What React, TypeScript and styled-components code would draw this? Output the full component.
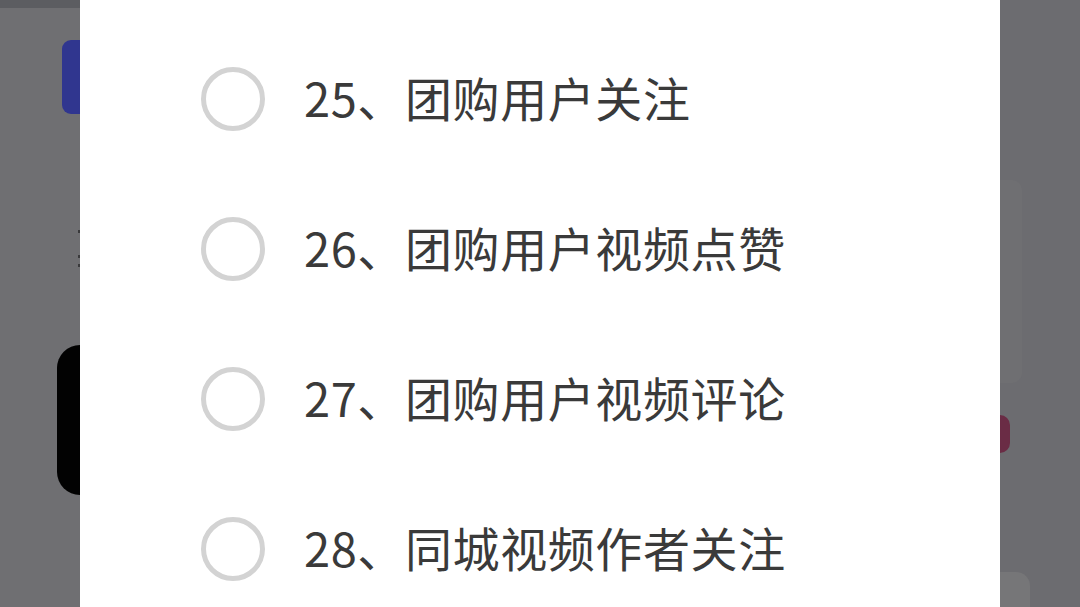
import styled, { createGlobalStyle } from "styled-components";

const GlobalStyle = createGlobalStyle`
  html, body {
    margin: 0;
    padding: 0;
    background: #6e6e71;
  }
  body {
    font-family: "Noto Sans CJK SC", "Noto Sans", sans-serif;
  }
`;

const options = [
  "25、团购用户关注",
  "26、团购用户视频点赞",
  "27、团购用户视频评论",
  "28、同城视频作者关注",
];

export default function App() {
  return (
    <>
      <GlobalStyle />
      <Screen>
        <LeftGutter>
          <TopStrip />
          <TabMarker />
          <Peek>
            <Tick />
            <Tick />
            <Tick />
          </Peek>
          <DarkButton />
        </LeftGutter>

        <Sheet>
          {options.map((label) => (
            <OptionRow key={label}>
              <Radio />
              <OptionLabel>{label}</OptionLabel>
            </OptionRow>
          ))}
        </Sheet>

        <RightGutter>
          <SidePanel />
          <PinkDot />
          <CornerBlob />
        </RightGutter>
      </Screen>
    </>
  );
}

const Screen = styled.div`
  width: 1080px;
  height: 607px;
  overflow: hidden;
  display: flex;
  background: #6f6f72;
`;

const LeftGutter = styled.div`
  width: 80px;
  flex-shrink: 0;
  display: flex;
  flex-direction: column;
  align-items: flex-end;
`;

const TopStrip = styled.div`
  align-self: stretch;
  height: 8px;
  background: #5c5d61;
`;

const TabMarker = styled.div`
  width: 18px;
  height: 74px;
  margin-top: 32px;
  background: #30368f;
  border-radius: 9px 0 0 9px;
`;

const Peek = styled.div`
  margin-top: 116px;
  display: flex;
  flex-direction: column;
  align-items: flex-end;
  gap: 6px;
`;

const Tick = styled.span`
  width: 2px;
  height: 3px;
  background: #3a3a3c;
  &:first-child {
    margin-bottom: 16px;
  }
`;

const DarkButton = styled.div`
  width: 23px;
  height: 150px;
  margin-top: 78px;
  background: #020202;
  border-radius: 26px 0 0 26px;
`;

const Sheet = styled.div`
  width: 920px;
  flex-shrink: 0;
  background: #ffffff;
  padding: 24px 0 0 121px;
  box-sizing: border-box;
  display: flex;
  flex-direction: column;
`;

const OptionRow = styled.div`
  height: 150px;
  flex-shrink: 0;
  display: flex;
  align-items: center;
  gap: 39px;
`;

const Radio = styled.span`
  width: 64px;
  height: 64px;
  box-sizing: border-box;
  border: 5px solid #d3d3d3;
  border-radius: 50%;
  flex-shrink: 0;
`;

const OptionLabel = styled.span`
  font-size: 47px;
  font-weight: 400;
  line-height: 1;
  padding-bottom: 6px;
  color: #3a3a3a;
  letter-spacing: 0.6px;
`;

const RightGutter = styled.div`
  flex: 1;
  display: flex;
  flex-direction: column;
  align-items: flex-start;
  background: #6c6c70;
`;

const SidePanel = styled.div`
  width: 22px;
  height: 210px;
  margin-top: 180px;
  background: #6f6f72;
  border-radius: 0 10px 10px 0;
`;

const PinkDot = styled.div`
  width: 10px;
  height: 40px;
  margin-top: 32px;
  background: #6a2c45;
  border-radius: 0 20px 20px 0;
`;

const CornerBlob = styled.div`
  width: 30px;
  height: 36px;
  margin-top: 119px;
  background: #767678;
  border-radius: 0 14px 0 0;
`;
